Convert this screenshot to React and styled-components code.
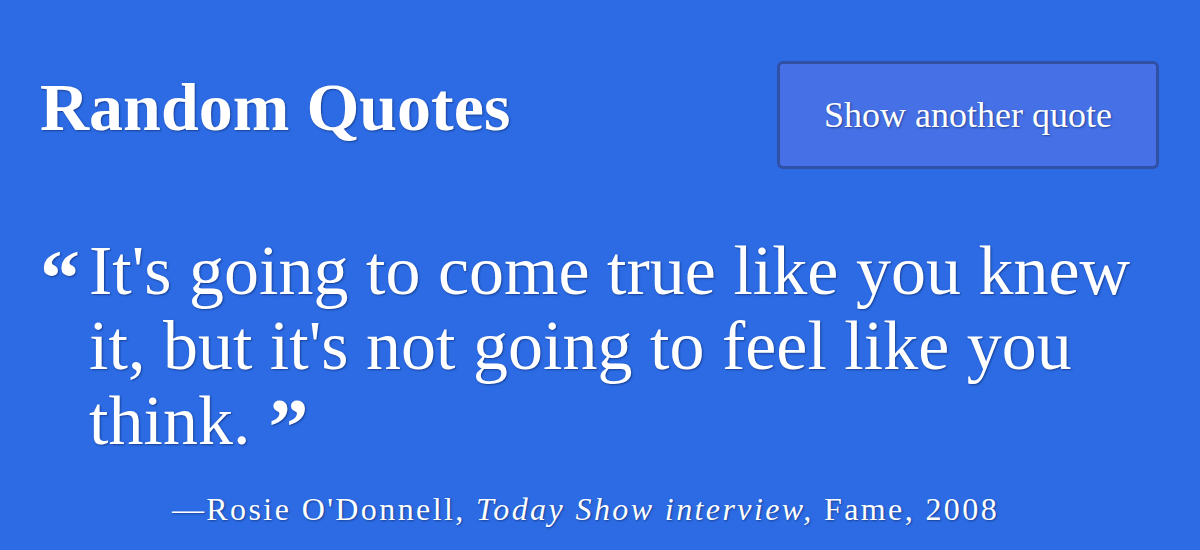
import React from 'react';
import styled, { createGlobalStyle } from 'styled-components';

const GlobalStyle = createGlobalStyle`
  html, body {
    margin: 0;
    padding: 0;
    background: #2c6be3;
  }
  body {
    font-family: "Liberation Serif", "DejaVu Serif", serif;
    color: #fff;
  }
`;

const Page = styled.div`
  width: 1200px;
  height: 550px;
  background: #2c6be3;
  overflow: hidden;
  text-shadow: 1px 1px 2px rgba(10, 30, 90, 0.55);
`;

const Header = styled.header`
  display: flex;
  justify-content: space-between;
  align-items: flex-start;
  padding: 61px 41px 0 40px;
`;

const Title = styled.h1`
  margin: 12px 0 0;
  font-size: 68px;
  line-height: 1;
  font-weight: 700;
`;

const Button = styled.button`
  width: 382px;
  height: 108px;
  box-sizing: border-box;
  background: #4670e6;
  border: 3px solid #3050a5;
  border-radius: 6px;
  color: #fff;
  font-family: inherit;
  font-size: 36px;
  text-shadow: inherit;
  cursor: pointer;
`;

const Figure = styled.figure`
  margin: 64px 69px 0 40px;
`;

const QuoteRow = styled.blockquote`
  display: flex;
  align-items: flex-start;
  margin: 0;
  width: 1120px;
`;

const Mark = styled.span`
  flex: 0 0 49px;
  margin-top: 5px;
  font-size: 80px;
  line-height: 1;
  font-weight: 700;
`;

const Text = styled.p`
  margin: 0;
  flex: 1;
  font-size: 70px;
  line-height: 75px;
`;

const CloseMark = styled.span`
  display: inline-block;
  margin-left: 18px;
  font-size: 80px;
  font-weight: 700;
  vertical-align: ${p => p.$drop}px;
  line-height: 1;
`;

const Cite = styled.figcaption`
  margin-top: 22px;
  text-align: center;
  font-size: 32px;
  line-height: 40px;
  letter-spacing: 2.4px;

  em {
    font-style: italic;
  }
`;

const quote = {
  text: "It's going to come true like you knew it, but it's not going to feel like you think.",
  author: "Rosie O'Donnell",
  source: 'Today Show interview',
  tags: 'Fame, 2008',
};

export default function App() {
  return (
    <>
      <GlobalStyle />
      <Page>
        <Header>
          <Title>Random Quotes</Title>
          <Button>Show another quote</Button>
        </Header>
        <Figure>
          <QuoteRow>
            <Mark>“</Mark>
            <Text>
              {quote.text}
              <CloseMark $drop={-10}>”</CloseMark>
            </Text>
          </QuoteRow>
          <Cite>
            —{quote.author}, <em>{quote.source},</em> {quote.tags}
          </Cite>
        </Figure>
      </Page>
    </>
  );
}
